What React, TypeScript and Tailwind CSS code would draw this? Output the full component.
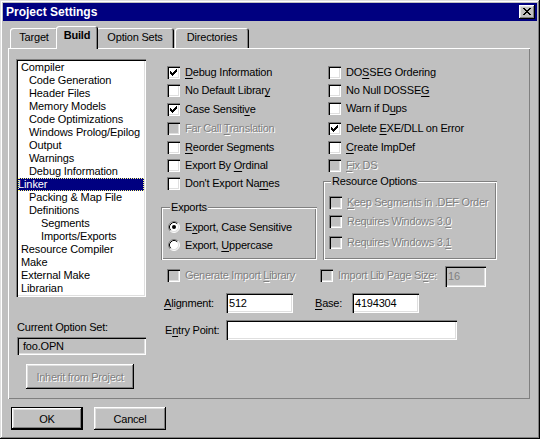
import React from "react";

const raised =
  "shadow-[inset_-1px_-1px_0_#000,inset_1px_1px_0_#fff,inset_-2px_-2px_0_#808080,inset_2px_2px_0_#dfdfdf]";
const sunken =
  "shadow-[inset_1px_1px_0_#808080,inset_2px_2px_0_#000,inset_-1px_-1px_0_#fff,inset_-2px_-2px_0_#dfdfdf]";
const etched =
  "shadow-[inset_1px_1px_0_#808080,inset_2px_2px_0_#fff,inset_-1px_-1px_0_#fff,inset_-2px_-2px_0_#808080]";
const dis = "text-[#808080] tracking-[-0.3px] [text-shadow:1px_1px_0_#fff]";
const ul = "underline decoration-1 underline-offset-2";

function U({ children }: { children: React.ReactNode }) {
  return <span className={ul}>{children}</span>;
}

function Check({ checked, disabled }: { checked?: boolean; disabled?: boolean }) {
  return (
    <span
      className={`relative block h-[13px] w-[13px] shrink-0 ${
        disabled ? "bg-[#c0c0c0]" : "bg-white"
      } ${sunken}`}
    >
      {checked && (
        <svg
          className="absolute left-[3px] top-[3px]"
          width="7"
          height="7"
          viewBox="0 0 7 7"
          shapeRendering="crispEdges"
        >
          <path
            d="M6 0h1v1h-1z M5 1h2v1h-2z M0 2h1v1h-1z M4 2h3v1h-3z M0 3h2v1h-2z M3 3h3v1h-3z M0 4h5v1h-5z M1 5h3v1h-3z M2 6h1v1h-1z"
            fill="#000"
          />
        </svg>
      )}
    </span>
  );
}

function CheckRow({
  checked,
  disabled,
  children,
  className,
}: {
  checked?: boolean;
  disabled?: boolean;
  children: React.ReactNode;
  className?: string;
}) {
  return (
    <div className={`flex h-[13px] items-center ${className ?? ""}`}>
      <Check checked={checked} disabled={disabled} />
      <span className={`ml-[5px] whitespace-nowrap leading-[13px] ${disabled ? dis : ""}`}>
        {children}
      </span>
    </div>
  );
}

function Radio({ checked }: { checked?: boolean }) {
  return (
    <svg width="12" height="12" viewBox="0 0 12 12" className="block shrink-0">
      <circle cx="6" cy="6" r="5" fill="#fff" />
      <path d="M2.11 9.89 A5.5 5.5 0 0 1 9.89 2.11" stroke="#808080" strokeWidth="1" fill="none" />
      <path d="M9.89 2.11 A5.5 5.5 0 0 1 2.11 9.89" stroke="#fff" strokeWidth="1" fill="none" />
      <path d="M2.82 9.18 A4.5 4.5 0 0 1 9.18 2.82" stroke="#000" strokeWidth="1" fill="none" />
      <path d="M9.18 2.82 A4.5 4.5 0 0 1 2.82 9.18" stroke="#dfdfdf" strokeWidth="1" fill="none" />
      {checked && <circle cx="6" cy="6" r="2" fill="#000" />}
    </svg>
  );
}

function RadioRow({
  checked,
  children,
  className,
}: {
  checked?: boolean;
  children: React.ReactNode;
  className?: string;
}) {
  return (
    <div className={`flex h-[12px] items-center ${className ?? ""}`}>
      <Radio checked={checked} />
      <span className="ml-[5px] whitespace-nowrap leading-[13px]">{children}</span>
    </div>
  );
}

function Tab({
  children,
  className,
  selected,
}: {
  children: React.ReactNode;
  className: string;
  selected?: boolean;
}) {
  return (
    <div
      className={`${className} ${
        selected ? "relative z-10 mb-[-1px] h-[23px] font-bold" : "h-[20px]"
      } rounded-t-[3px] bg-[#c0c0c0] pt-[3px] text-center leading-[13px] shadow-[inset_1px_1px_0_#fff,inset_-1px_0_0_#000,inset_-2px_0_0_#808080]`}
    >
      {children}
    </div>
  );
}

const listItems: [string, number][] = [
  ["Compiler", 0],
  ["Code Generation", 1],
  ["Header Files", 1],
  ["Memory Models", 1],
  ["Code Optimizations", 1],
  ["Windows Prolog/Epilog", 1],
  ["Output", 1],
  ["Warnings", 1],
  ["Debug Information", 1],
  ["Linker", 0],
  ["Packing & Map File", 1],
  ["Definitions", 1],
  ["Segments", 2],
  ["Imports/Exports", 2],
  ["Resource Compiler", 0],
  ["Make", 0],
  ["External Make", 0],
  ["Librarian", 0],
];

export default function App() {
  return (
    <div className="h-[439px] w-[540px] overflow-hidden bg-[#c0c0c0] p-[3px] font-['Liberation_Sans',Arial,sans-serif] text-[11px] leading-[13px] tracking-[-0.2px] text-black shadow-[inset_-1px_-1px_0_#000,inset_1px_1px_0_#dfdfdf,inset_-2px_-2px_0_#808080,inset_2px_2px_0_#fff]">
      {/* Title bar */}
      <div className="flex h-[18px] items-center justify-between bg-[#000080] pl-[3px] pr-[2px]">
        <span className="text-[12px] font-bold leading-[14px] tracking-normal text-white">
          Project Settings
        </span>
        <div className={`relative h-[14px] w-[16px] bg-[#c0c0c0] ${raised}`}>
          <svg
            className="absolute left-[4px] top-[3px]"
            width="8"
            height="7"
            viewBox="0 0 8 7"
            shapeRendering="crispEdges"
          >
            <path
              d="M0 0h2v1h-2z M6 0h2v1h-2z M1 1h2v1h-2z M5 1h2v1h-2z M2 2h4v1h-4z M3 3h2v1h-2z M2 4h4v1h-4z M1 5h2v1h-2z M5 5h2v1h-2z M0 6h2v1h-2z M6 6h2v1h-2z"
              fill="#000"
            />
          </svg>
        </div>
      </div>

      {/* Tabs + panel */}
      <div className="ml-[5px] mt-[5px] w-[522px]">
        <div className="flex h-[22px] items-end pl-[2px]">
          <Tab className="w-[48px]">Target</Tab>
          <Tab className="ml-[-2px] w-[42px]" selected>
            Build
          </Tab>
          <Tab className="ml-[-2px] w-[78px]">Option Sets</Tab>
          <Tab className="ml-[1px] w-[74px]">Directories</Tab>
        </div>

        <div className="flex h-[351px] items-start bg-[#c0c0c0] shadow-[inset_1px_1px_0_#fff,inset_-1px_-1px_0_#808080]">
          {/* Left column */}
          <div className="ml-[8px] mt-[11px] flex w-[130px] flex-col">
            <div className={`h-[238px] bg-white p-[2px] tracking-[-0.1px] ${sunken}`}>
              {listItems.map(([label, level]) => {
                const selected = label === "Linker";
                return (
                  <div
                    key={label}
                    className={`h-[13px] whitespace-nowrap leading-[13px] ${
                      selected
                        ? "bg-[#000080] pl-0 text-white outline-1 -outline-offset-1 outline-dotted outline-[#ffff80]"
                        : level === 0
                        ? "pl-[3px]"
                        : level === 1
                        ? "pl-[11px]"
                        : "pl-[23px]"
                    }`}
                  >
                    {label}
                  </div>
                );
              })}
            </div>
            <div className="ml-[1px] mt-[24px] leading-[13px]">Current Option Set:</div>
            <div
              className={`ml-[1px] mt-[3px] flex h-[18px] w-[129px] items-center bg-[#c0c0c0] pl-[6px] ${sunken}`}
            >
              foo.OPN
            </div>
            <div
              className={`ml-[10px] mt-[9px] flex h-[25px] w-[108px] items-center justify-center bg-[#c0c0c0] pt-[2px] ${raised}`}
            >
              <span className={dis}>Inherit from Project</span>
            </div>
          </div>

          {/* Right column */}
          <div className="ml-[15px] mt-[18px] flex w-[336px] flex-col">
            <div className="flex">
              {/* Column A */}
              <div className="flex w-[156px] flex-col">
                <CheckRow checked className="ml-[6px]">
                  <U>D</U>ebug Information
                </CheckRow>
                <CheckRow className="ml-[6px] mt-[5px]">
                  No Default Librar<U>y</U>
                </CheckRow>
                <CheckRow checked className="ml-[6px] mt-[6px]">
                  Case Sensiti<U>v</U>e
                </CheckRow>
                <CheckRow disabled className="ml-[6px] mt-[6px]">
                  Far Call <U>T</U>ranslation
                </CheckRow>
                <CheckRow className="ml-[6px] mt-[6px]">
                  <U>R</U>eorder Segments
                </CheckRow>
                <CheckRow className="ml-[6px] mt-[5px]">
                  Export By <U>O</U>rdinal
                </CheckRow>
                <CheckRow className="ml-[6px] mt-[5px]">
                  Don't Export Na<U>m</U>es
                </CheckRow>
                <div className={`relative mt-[17px] h-[53px] w-[156px] ${etched}`}>
                  <span className="absolute left-[9px] top-[-6px] bg-[#c0c0c0] px-[1px] leading-[13px]">
                    Exports
                  </span>
                  <div className="flex flex-col pl-[7px] pt-[14px]">
                    <RadioRow checked>
                      E<U>x</U>port, Case Sensitive
                    </RadioRow>
                    <RadioRow className="mt-[6px]">
                      Export, <U>U</U>ppercase
                    </RadioRow>
                  </div>
                </div>
              </div>

              {/* Column B */}
              <div className="ml-[6px] flex w-[174px] flex-col">
                <CheckRow className="ml-[5px]">
                  DO<U>S</U>SEG Ordering
                </CheckRow>
                <CheckRow className="ml-[5px] mt-[5px]">
                  No Null DOSSE<U>G</U>
                </CheckRow>
                <CheckRow className="ml-[5px] mt-[5px]">
                  Warn if D<U>u</U>ps
                </CheckRow>
                <CheckRow checked className="ml-[5px] mt-[7px]">
                  Delete <U>E</U>XE/DLL on Error
                </CheckRow>
                <CheckRow className="ml-[5px] mt-[6px]">
                  <U>C</U>reate ImpDef
                </CheckRow>
                <CheckRow disabled className="ml-[5px] mt-[5px]">
                  <U>F</U>ix DS
                </CheckRow>
                <div className={`relative mt-[9px] h-[79px] w-[174px] ${etched}`}>
                  <span className="absolute left-[8px] top-[-6px] bg-[#c0c0c0] px-[1px] leading-[13px]">
                    Resource Options
                  </span>
                  <div className="flex flex-col pl-[6px] pt-[15px]">
                    <CheckRow disabled>
                      <U>K</U>eep Segments in .DEF Order
                    </CheckRow>
                    <CheckRow disabled className="mt-[6px]">
                      Requires Windows 3.<U>0</U>
                    </CheckRow>
                    <CheckRow disabled className="mt-[8px]">
                      Requires Windows 3.<U>1</U>
                    </CheckRow>
                  </div>
                </div>
              </div>
            </div>

            {/* Import library row */}
            <div className="mt-[6px] flex h-[21px] items-start">
              <div className="w-[159px] pl-[6px] pt-[3px]">
                <CheckRow disabled>
                  Generate Import <U>L</U>ibrary
                </CheckRow>
              </div>
              <div className="w-[125px] pt-[3px]">
                <CheckRow disabled>
                  Import Lib Page Si<U>z</U>e:
                </CheckRow>
              </div>
              <div
                className={`flex h-[21px] w-[41px] items-center bg-[#c0c0c0] pl-[3px] text-[#808080] ${sunken}`}
              >
                16
              </div>
            </div>

            {/* Alignment / Base */}
            <div className="mt-[6px] flex h-[20px] items-center">
              <span className="w-[65px] pl-[3px] pt-[1px]">
                <U>A</U>lignment:
              </span>
              <div className={`flex h-[20px] w-[67px] items-center bg-white pl-[3px] ${sunken}`}>512</div>
              <span className="w-[59px] pl-[22px] pt-[1px]">
                <U>B</U>ase:
              </span>
              <div className={`flex h-[20px] w-[67px] items-center bg-white pl-[3px] ${sunken}`}>
                4194304
              </div>
            </div>

            {/* Entry point */}
            <div className="mt-[7px] flex h-[20px] items-center">
              <span className="w-[65px] pl-[4px] pt-[1px]">
                E<U>n</U>try Point:
              </span>
              <div className={`h-[20px] w-[231px] bg-white ${sunken}`} />
            </div>
          </div>
        </div>
      </div>

      {/* Dialog buttons */}
      <div className="ml-[8px] mt-[8px] flex">
        <div className="h-[23px] w-[72px] border border-black">
          <div className={`flex h-full w-full items-center justify-center bg-[#c0c0c0] pt-[2px] ${raised}`}>
            OK
          </div>
        </div>
        <div
          className={`ml-[11px] flex h-[23px] w-[72px] items-center justify-center bg-[#c0c0c0] pt-[2px] ${raised}`}
        >
          Cancel
        </div>
      </div>
    </div>
  );
}
